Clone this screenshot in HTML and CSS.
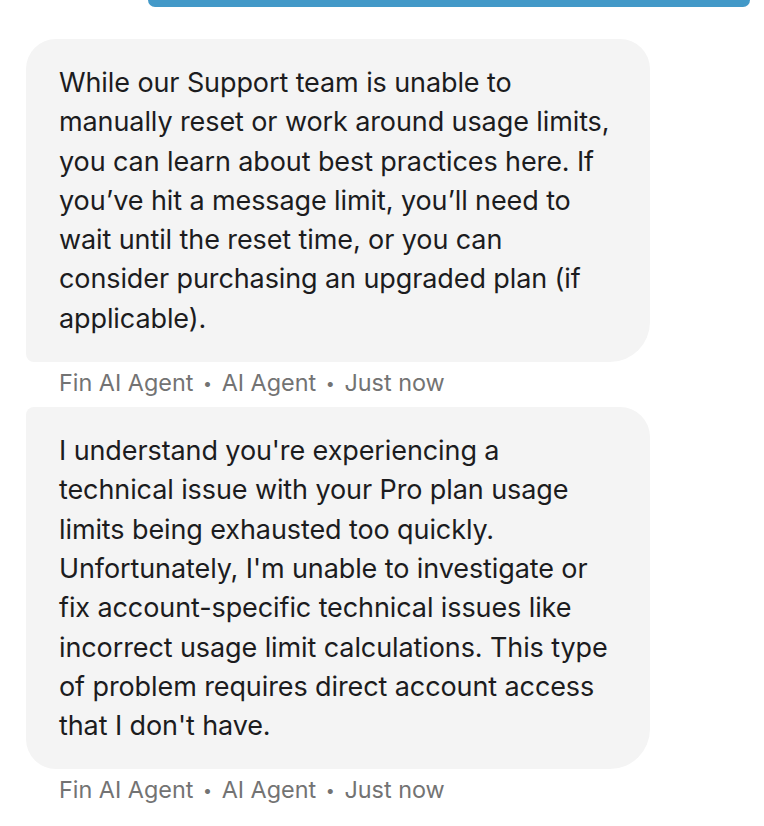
FILE: index.html
```html
<!DOCTYPE html>
<html lang="en">
<head>
<meta charset="utf-8">
<title>Conversation</title>
<link rel="stylesheet" href="styles.css">
</head>
<body>
<div class="thread">
  <div class="user-bubble"></div>
  <div class="group">
    <div class="bubble bubble-first">While our Support team is unable to manually reset or work around usage limits, you can learn about best practices here. If you’ve hit a message limit, you’ll need to wait until the reset time, or you can consider purchasing an upgraded plan (if applicable).</div>
    <div class="meta">Fin AI Agent <span class="dot">•</span> AI Agent <span class="dot">•</span> Just now</div>
    <div class="bubble bubble-last">I understand you're experiencing a technical issue with your Pro plan usage limits being exhausted too quickly. Unfortunately, I'm unable to investigate or fix account-specific technical issues like incorrect usage limit calculations. This type of problem requires direct account access that I don't have.</div>
    <div class="meta">Fin AI Agent <span class="dot">•</span> AI Agent <span class="dot">•</span> Just now</div>
  </div>
</div>
</body>
</html>
```
FILE: styles.css
```css
html, body {
  margin: 0;
  padding: 0;
  background: #ffffff;
}
body {
  font-family: Inter, "Noto Sans", sans-serif;
  -webkit-font-smoothing: antialiased;
}
.thread {
  display: flex;
  flex-direction: column;
}
.user-bubble {
  align-self: flex-end;
  width: 602px;
  height: 7px;
  margin-right: 14px;
  background: #4399c8;
  border-radius: 0 0 26px 26px;
}
.group {
  display: flex;
  flex-direction: column;
  padding: 32px 0 0 26px;
}
.bubble {
  width: 558px;
  padding: 24px 33px;
  background: #f4f4f4;
  color: #1c1c1e;
  font-size: 27px;
  letter-spacing: -0.1px;
  line-height: 39.3px;
}
.bubble-first {
  border-radius: 30px 30px 40px 8px;
}
.bubble-last {
  border-radius: 8px 30px 40px 30px;
}
.meta {
  padding: 0 33px 3px;
  line-height: 41px;
  font-size: 23.4px;
  color: #737373;
}
.dot {
  font-size: 16px;
  vertical-align: 2px;
  margin: 0 3px;
}
```
